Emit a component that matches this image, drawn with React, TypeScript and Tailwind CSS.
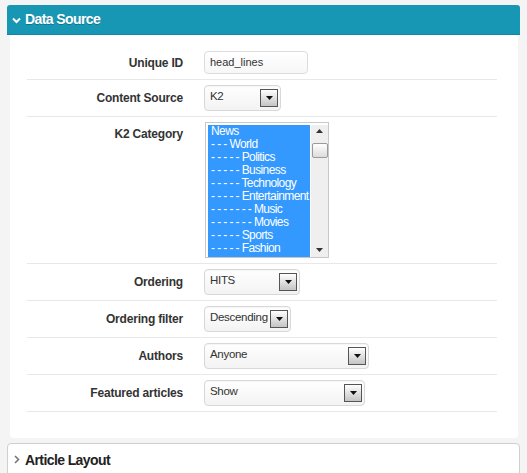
import React from 'react'

const categories = [
    'News',
    '- - - World',
    '- - - - - Politics',
    '- - - - - Business',
    '- - - - - Technology',
    '- - - - - Entertainment',
    '- - - - - - - Music',
    '- - - - - - - Movies',
    '- - - - - Sports',
    '- - - - - Fashion',
]

function Arrow() {
    return (
        <div className="w-[18px] h-[18px] border border-[#555] bg-gradient-to-b from-white to-[#c4c4c4] flex items-center justify-center shrink-0">
            <svg width="7" height="4" viewBox="0 0 7 4">
                <path d="M0 0 L7 0 L3.5 4 Z" fill="#111" />
            </svg>
        </div>
    )
}

function Select({ value, width }: { value: string; width: string }) {
    return (
        <div
            className={`${width} h-[26px] border border-[#d8d8d8] rounded-[4px] bg-gradient-to-b from-white to-[#f3f3f3] flex items-start justify-between gap-[2px] pl-[5px] pr-[2px] pt-[3px] shadow-[inset_0_1px_1px_rgba(0,0,0,0.04)]`}
        >
            <span className="text-[11.5px] leading-[15px] text-[#333] tracking-[-0.3px] whitespace-nowrap">{value}</span>
            <Arrow />
        </div>
    )
}

function Row({ label, labelH, children }: { label: string; labelH: string; children: React.ReactNode }) {
    return (
        <div className="flex items-start py-[5px] border-b border-[#e8e8e8]">
            <div className={`w-[156px] ${labelH} flex items-center justify-end text-[12px] font-bold text-[#333] tracking-[-0.2px]`}>
                {label}
            </div>
            <div className="ml-[21px]">{children}</div>
        </div>
    )
}

function ListBox() {
    return (
        <div className="ml-[1px] w-[124px] h-[136px] border border-[#c8c8c8] bg-white flex p-[2px] pr-0 pb-0 overflow-hidden">
            <div className="w-[103px] h-[132px] bg-[#3399ff] overflow-hidden pl-[3px]">
                {categories.map(c => (
                    <div key={c} className="text-[12px] leading-[13px] text-white whitespace-nowrap tracking-[-0.6px]">
                        {c}
                    </div>
                ))}
            </div>
            <div className="ml-[1px] w-[17px] h-[132px] bg-[#efefef] flex flex-col items-center justify-between pt-[4px] pb-[5px]">
                <div className="flex flex-col items-center">
                    <svg width="7" height="4" viewBox="0 0 7 4">
                        <path d="M0 4 L7 4 L3.5 0 Z" fill="#333" />
                    </svg>
                    <div className="mt-[10px] w-[16px] h-[15px] border border-[#9a9a9a] rounded-[2px] bg-gradient-to-b from-white to-[#dcdcdc]" />
                </div>
                <svg width="7" height="4" viewBox="0 0 7 4">
                    <path d="M0 0 L7 0 L3.5 4 Z" fill="#333" />
                </svg>
            </div>
        </div>
    )
}

export default function App() {
    return (
        <div className="min-h-screen bg-[#f4f4f4] pt-[5px] px-[7px] font-['Liberation_Sans',Arial,sans-serif]">
            <div className="h-[30px] bg-[#1897b5] border-b border-[#1486a1] rounded-t-[3px] flex items-center pl-[5px]">
                <svg width="9" height="7" viewBox="0 0 9 7" className="mr-[4px] mt-[1px]">
                    <path d="M1 1.5 L4.5 5 L8 1.5" stroke="white" strokeWidth="2" fill="none" />
                </svg>
                <span className="text-white font-bold text-[14px] tracking-[-0.6px] [text-shadow:0_1px_0_rgba(0,0,0,0.25)]">
                    Data Source
                </span>
            </div>

            <div className="ml-[3px] mr-[2px] bg-white pt-[11px] pb-[26px] rounded-b-[4px]">
                <div className="ml-[17px] w-[470px]">
                    <Row label="Unique ID" labelH="h-[23px]">
                        <div className="w-[104px] h-[23px] border border-[#dcdcdc] rounded-[4px] bg-gradient-to-b from-white to-[#f7f7f7] pl-[5px] flex items-center">
                            <span className="text-[11px] text-[#333]">head_lines</span>
                        </div>
                    </Row>
                    <Row label="Content Source" labelH="h-[26px]">
                        <Select value="K2" width="w-[77px]" />
                    </Row>
                    <Row label="K2 Category" labelH="h-[24px]">
                        <ListBox />
                    </Row>
                    <Row label="Ordering" labelH="h-[25px]">
                        <Select value="HITS" width="w-[96px]" />
                    </Row>
                    <Row label="Ordering filter" labelH="h-[25px]">
                        <Select value="Descending" width="w-[87px]" />
                    </Row>
                    <Row label="Authors" labelH="h-[26px]">
                        <Select value="Anyone" width="w-[165px]" />
                    </Row>
                    <Row label="Featured articles" labelH="h-[25px]">
                        <Select value="Show" width="w-[161px]" />
                    </Row>
                </div>
            </div>

            <div className="mt-[5px] h-[40px] border border-[#cfcfcf] rounded-t-[4px] bg-white flex items-start pt-[6px] pl-[6px]">
                <svg width="6" height="9" viewBox="0 0 6 9" className="mr-[5px] mt-[5px]">
                    <path d="M1 1 L4.5 4.5 L1 8" stroke="#777" strokeWidth="1.6" fill="none" />
                </svg>
                <span className="text-[14px] font-bold text-[#222] tracking-[-0.6px]">Article Layout</span>
            </div>
        </div>
    )
}
